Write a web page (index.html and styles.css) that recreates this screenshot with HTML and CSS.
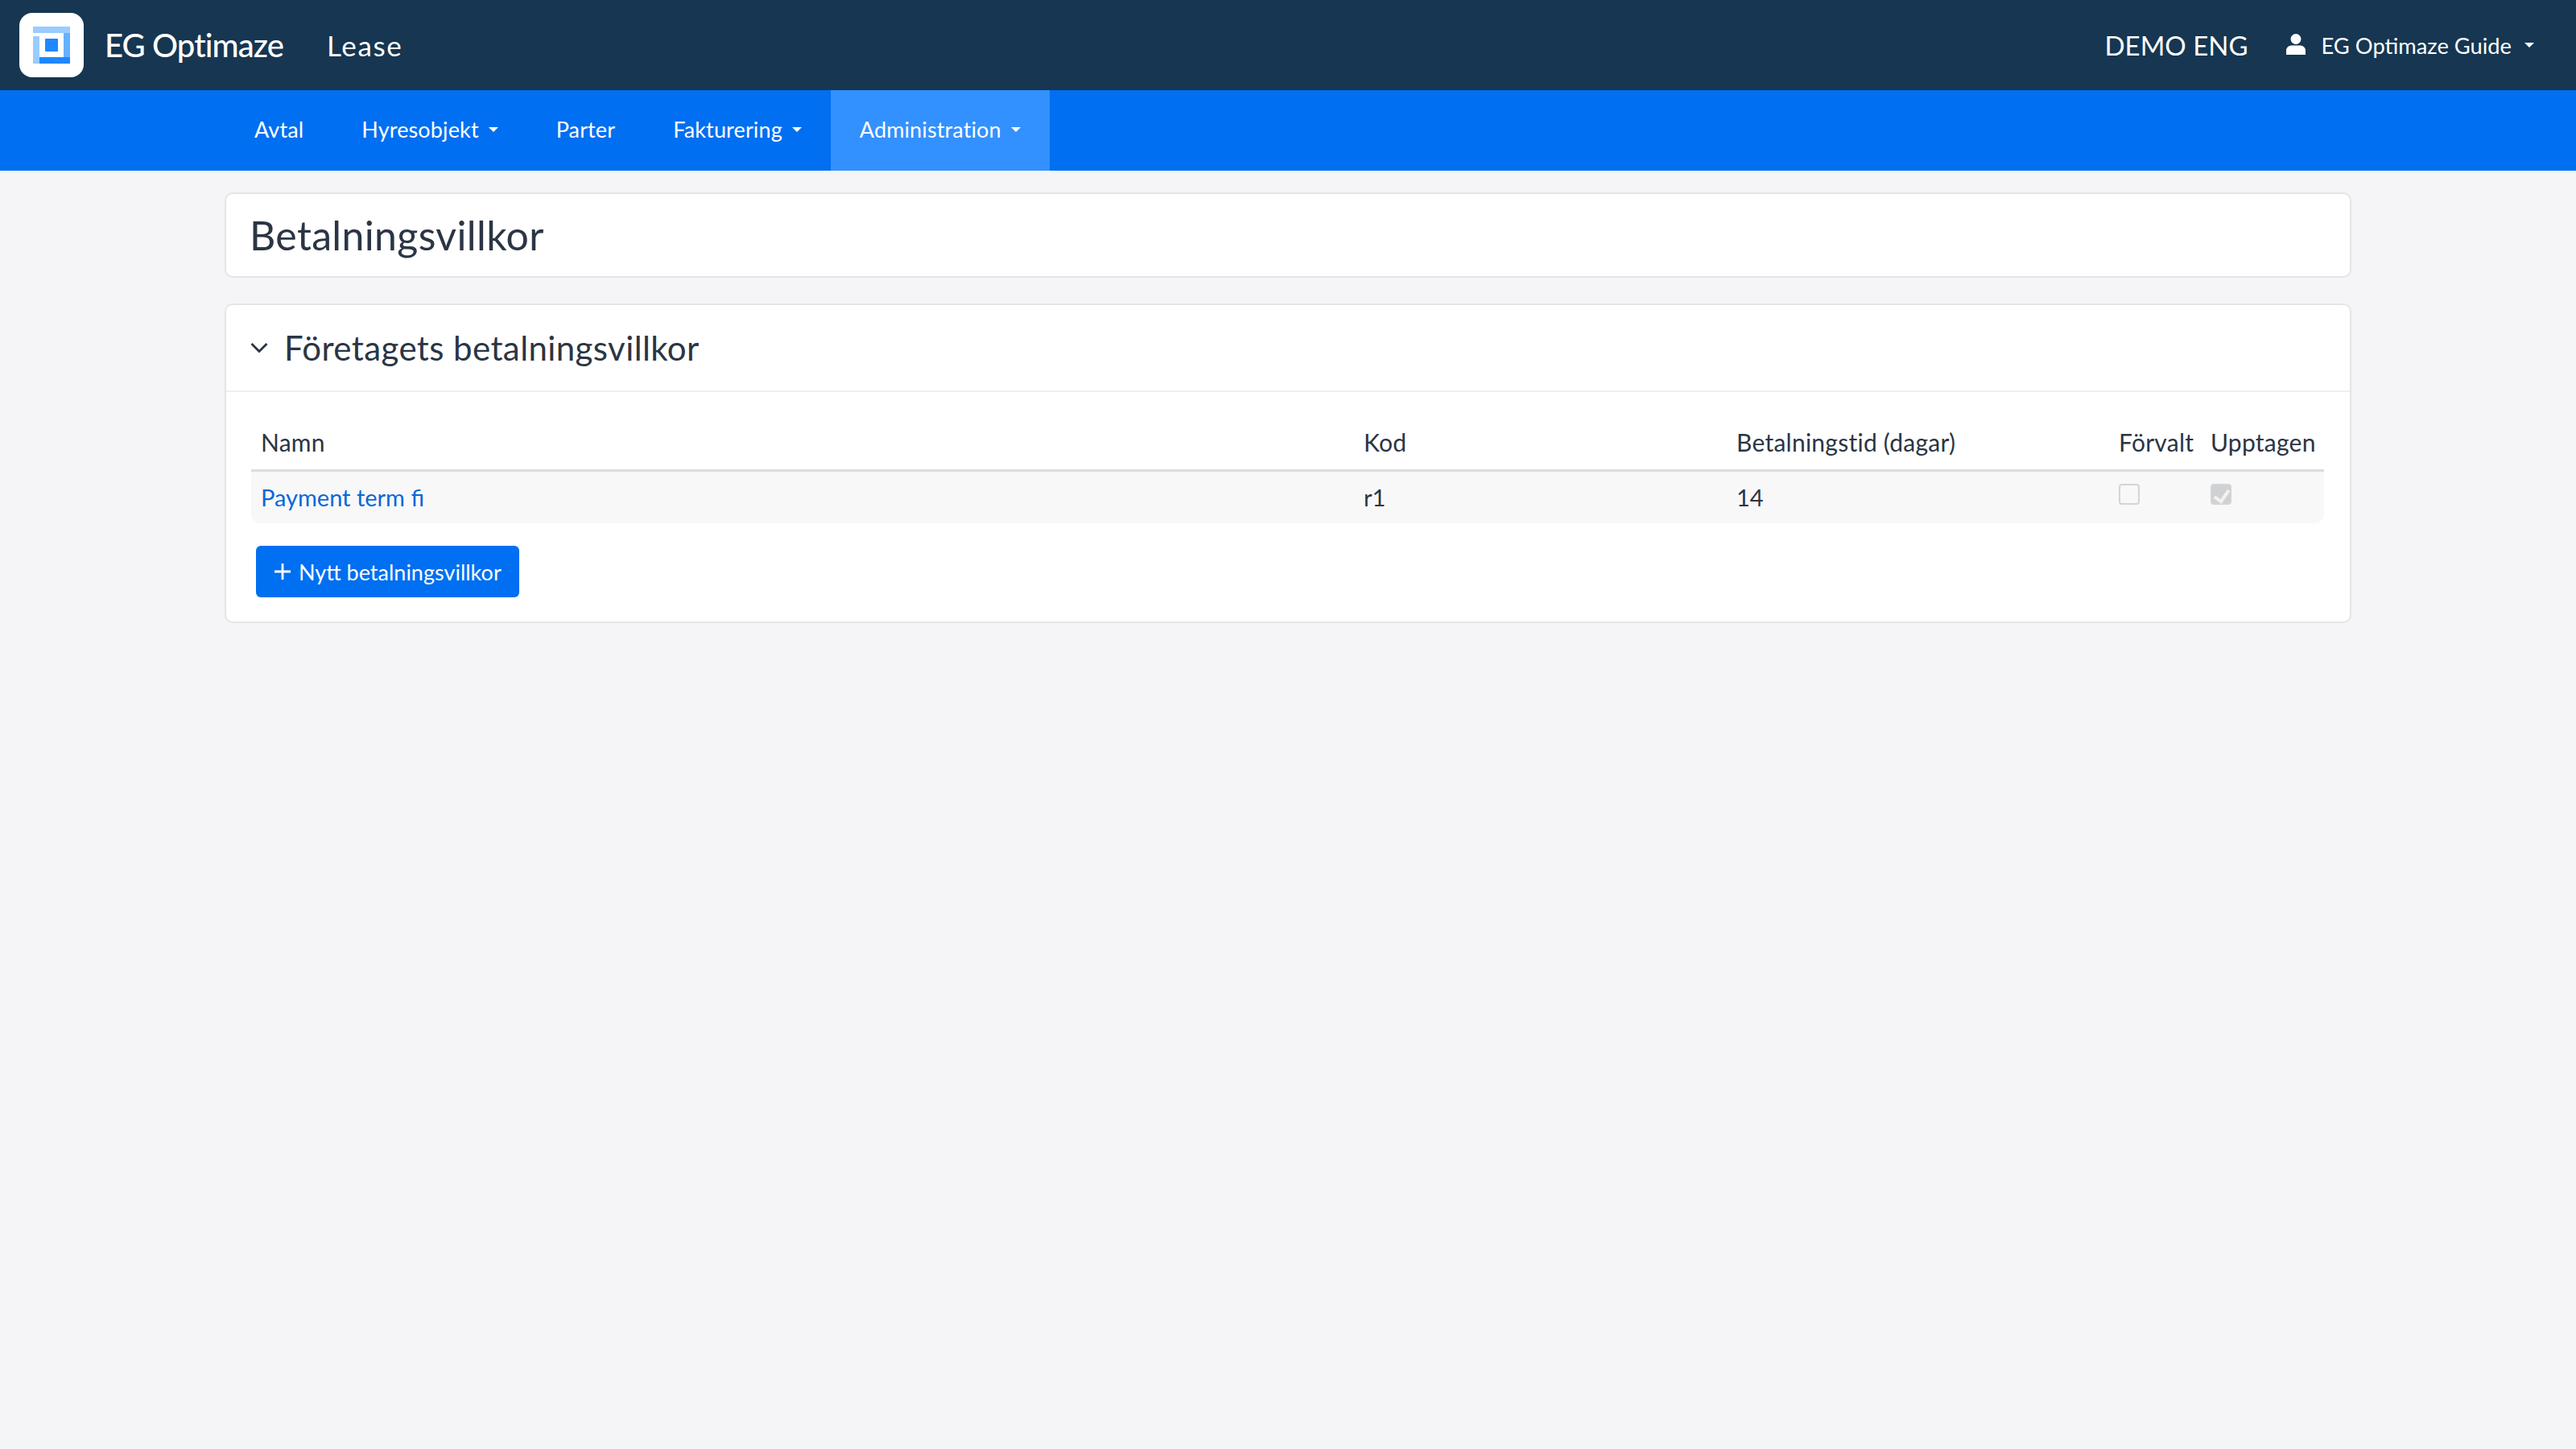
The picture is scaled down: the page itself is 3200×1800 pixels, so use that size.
FILE: index.html
```html
<!DOCTYPE html>
<html lang="sv">
  <head>
    <meta charset="UTF-8" />
    <title>Betalningsvillkor</title>
    <link rel="stylesheet" href="styles.css">
  </head>
  <body>
    <header class="topBar">
      <div class="logoTile">
        <svg width="46" height="46" viewBox="0 0 46 46">
          <rect x="0" y="0" width="46" height="8" fill="#99ccff" />
          <rect x="0" y="12" width="8" height="34" fill="#99ccff" />
          <rect x="38" y="8" width="8" height="30" fill="#66b0ff" />
          <rect x="8" y="38" width="38" height="8" fill="#1f87ff" />
          <rect x="15" y="15" width="16" height="16" rx="1" fill="#1f87ff" />
        </svg>
      </div>
      <span class="brand">EG Optimaze</span>
      <span class="product">Lease</span>
      <span class="spacer"></span>
      <span class="tenant">DEMO ENG</span>
      <svg class="userIcon" width="24" height="26" viewBox="0 0 24 26">
        <ellipse cx="12" cy="6.500" rx="6.500" ry="6.500" fill="#fff" />
        <path d="M0 26v-5c0-4 3-6.500 7-6.500h10c4 0 7 2.500 7 6.500v5z" fill="#fff" />
      </svg>
      <span class="userName">EG Optimaze Guide</span>
      <span class="caret userCaret"></span>
    </header>

    <nav class="navBar">
      <a class="navItem">Avtal</a>
      <a class="navItem">Hyresobjekt<span class="caret"></span></a>
      <a class="navItem">Parter</a>
      <a class="navItem">Fakturering<span class="caret"></span></a>
      <a class="navItem active">Administration<span class="caret"></span></a>
    </nav>

    <main class="content">
      <div class="card titleCard">
        <h1>Betalningsvillkor</h1>
      </div>

      <section class="card">
        <div class="cardHeader">
          <svg width="22" height="14" viewBox="0 0 22 14">
            <path d="M1.500 2l9.500 9.500L20.500 2" fill="none" stroke="#2b3544" stroke-width="2.800" />
          </svg>
          <h2>Företagets betalningsvillkor</h2>
        </div>
        <div class="cardBody">
          <table class="termsTable">
            <colgroup>
              <col class="colName" />
              <col class="colCode" />
              <col class="colDays" />
              <col class="colDefault" />
              <col class="colTaken" />
            </colgroup>
            <thead>
              <tr>
                <th>Namn</th>
                <th>Kod</th>
                <th>Betalningstid (dagar)</th>
                <th>Förvalt</th>
                <th>Upptagen</th>
              </tr>
            </thead>
            <tbody>
              <tr>
                <td><a class="termLink">Payment term fi</a></td>
                <td>r1</td>
                <td>14</td>
                <td><input type="checkbox" disabled /></td>
                <td><input type="checkbox" disabled checked /></td>
              </tr>
            </tbody>
          </table>
          <button class="addButton">
            <svg class="plus" width="20" height="20" viewBox="0 0 20 20">
              <path d="M10 0v20M0 10h20" stroke="#fff" stroke-width="2.800" />
            </svg>
            Nytt betalningsvillkor
          </button>
        </div>
      </section>
    </main>
  </body>
</html>
```

FILE: styles.css
```css
* {
  box-sizing: border-box;
}

body {
  margin: 0;
  min-height: 1800px;
  background-color: #f5f5f8;
  color: #2b3544;
  font-family: "Lato", "Noto Sans", sans-serif;
  font-size: 29px;
}

.topBar {
  height: 112px;
  padding: 0 52px 0 24px;
  display: flex;
  align-items: center;
  background-color: #163651;
  color: #fff;
}

.logoTile {
  width: 80px;
  height: 80px;
  border-radius: 16px;
  background-color: #fff;
  display: flex;
  justify-content: center;
  align-items: center;
}

.brand {
  margin-left: 26px;
  font-size: 40px;
  font-weight: 500;
  letter-spacing: -0.9px;
}

.product {
  margin-left: 54px;
  font-size: 35px;
  letter-spacing: 1.600px;
}

.spacer {
  flex: 1;
}

.tenant {
  font-size: 33px;
}

.userIcon {
  margin-left: 47px;
  margin-top: -2px;
}

.userName {
  margin-left: 20px;
  font-size: 27.300px;
}

.caret {
  display: inline-block;
  margin-left: 12px;
  border-top: 6px solid #fff;
  border-left: 6px solid transparent;
  border-right: 6px solid transparent;
  vertical-align: middle;
}

.userCaret {
  margin-left: 16px;
}

.navBar {
  height: 100px;
  padding-left: 280px;
  display: flex;
  background-color: #006ff1;
  color: #fff;
  font-size: 27px;
  letter-spacing: 0.13px;
}

.navItem {
  padding: 0 36px 3px;
  display: flex;
  align-items: center;
}

.navItem.active {
  background-color: #3390ff;
}

.content {
  width: 2642px;
  margin: 0 auto;
  padding-top: 27px;
}

.card {
  margin-bottom: 32px;
  border: 2px solid #e4e5e8;
  border-radius: 10px;
  background-color: #fff;
}

.titleCard {
  height: 106px;
  padding-left: 29px;
  display: flex;
  align-items: center;
}

h1 {
  margin: 0;
  font-size: 50px;
  font-weight: 400;
  letter-spacing: 0.35px;
}

.cardHeader {
  height: 108px;
  padding-left: 30px;
  display: flex;
  align-items: center;
  gap: 20px;
  border-bottom: 2px solid #eeeff1;
}

h2 {
  margin: 0;
  font-size: 42px;
  font-weight: 400;
  letter-spacing: 0.4px;
}

.cardBody {
  padding: 30px 31px 30px;
}

.termsTable {
  width: 2575px;
  table-layout: fixed;
  border-collapse: separate;
  border-spacing: 0;
}

.colName {
  width: 1370px;
}

.colCode {
  width: 463px;
}

.colDays {
  width: 475px;
}

.colDefault {
  width: 114px;
}

.colTaken {
  width: 153px;
}

th {
  height: 69px;
  padding: 0 12px 2px;
  text-align: left;
  font-size: 30px;
  font-weight: 400;
  letter-spacing: 0.25px;
  white-space: nowrap;
  border-bottom: 3px solid #dcdddf;
}

td {
  height: 64px;
  padding: 0 12px 2px;
  background-color: #f8f8f9;
}

td:first-child {
  border-radius: 0 0 0 12px;
}

td:last-child {
  border-radius: 0 0 12px 0;
}

.termLink {
  color: #0a67d8;
}

input[type="checkbox"] {
  appearance: none;
  display: block;
  position: relative;
  width: 26px;
  height: 26px;
  margin: 0 0 6px;
  border: 2px solid #d3d4d6;
  border-radius: 4px;
  background-color: #f8f8f9;
}

input[type="checkbox"]:checked {
  background-color: #d0d1d3;
}

input[type="checkbox"]:checked::after {
  content: "";
  position: absolute;
  left: 6px;
  top: 2px;
  width: 8px;
  height: 15px;
  border: solid #f2f2f3;
  border-width: 0 4px 4px 0;
  transform: rotate(35deg);
}

.addButton {
  width: 327px;
  height: 64px;
  margin: 28px 0 0 6px;
  padding: 0 0 0 23px;
  display: flex;
  align-items: center;
  border: none;
  border-radius: 6px;
  background-color: #006ff1;
  color: #fff;
  font-family: inherit;
  font-size: 27px;
}

.plus {
  margin-right: 10px;
}
```
